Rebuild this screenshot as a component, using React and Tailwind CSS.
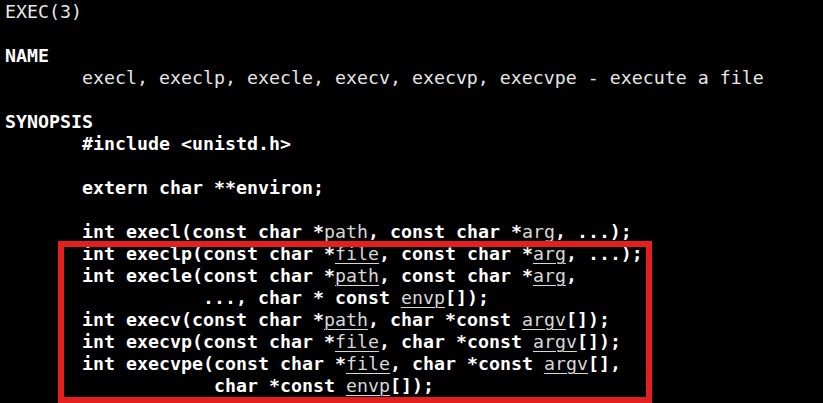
// man page view: exec(3), with a red highlight box over the exec family prototypes

const B = ({ children }) => <span className="font-bold text-white">{children}</span>;
const U = ({ children }) => (
  <span className="font-normal text-[#d8d8d8] underline decoration-1 underline-offset-[3px]">{children}</span>
);

const IND = "       ";

export default function App() {
  return (
    <div className="relative w-[823px] h-[403px] overflow-hidden bg-black">
      <pre className="m-0 pl-[5px] pt-[1px] whitespace-pre font-['DejaVu_Sans_Mono',monospace] text-[18.27px] leading-[22px] text-[#e6e6e6]">
        <div>EXEC(3)</div>
        <div>{" "}</div>
        <div><B>NAME</B></div>
        <div>{IND}execl, execlp, execle, execv, execvp, execvpe - execute a file</div>
        <div>{" "}</div>
        <div><B>SYNOPSIS</B></div>
        <div>{IND}<B>#include &lt;unistd.h&gt;</B></div>
        <div>{" "}</div>
        <div>{IND}<B>extern char **environ;</B></div>
        <div>{" "}</div>
        <div>
          {IND}<B>int execl(const char *</B><U>path</U><B>, const char *</B><U>arg</U><B>, ...);</B>
        </div>
        <div>
          {IND}<B>int execlp(const char *</B><U>file</U><B>, const char *</B><U>arg</U><B>, ...);</B>
        </div>
        <div>
          {IND}<B>int execle(const char *</B><U>path</U><B>, const char *</B><U>arg</U><B>,</B>
        </div>
        <div>
          {IND}{"           "}<B>..., char * const </B><U>envp</U><B>[]);</B>
        </div>
        <div>
          {IND}<B>int execv(const char *</B><U>path</U><B>, char *const </B><U>argv</U><B>[]);</B>
        </div>
        <div>
          {IND}<B>int execvp(const char *</B><U>file</U><B>, char *const </B><U>argv</U><B>[]);</B>
        </div>
        <div>
          {IND}<B>int execvpe(const char *</B><U>file</U><B>, char *const </B><U>argv</U><B>[],</B>
        </div>
        <div>
          {IND}{"            "}<B>char *const </B><U>envp</U><B>[]);</B>
        </div>
      </pre>

      {/* annotation box */}
      <div className="absolute left-[58px] top-[241px] w-[594px] h-[162px] border-[6px] border-[#e3201f]" />
    </div>
  );
}
